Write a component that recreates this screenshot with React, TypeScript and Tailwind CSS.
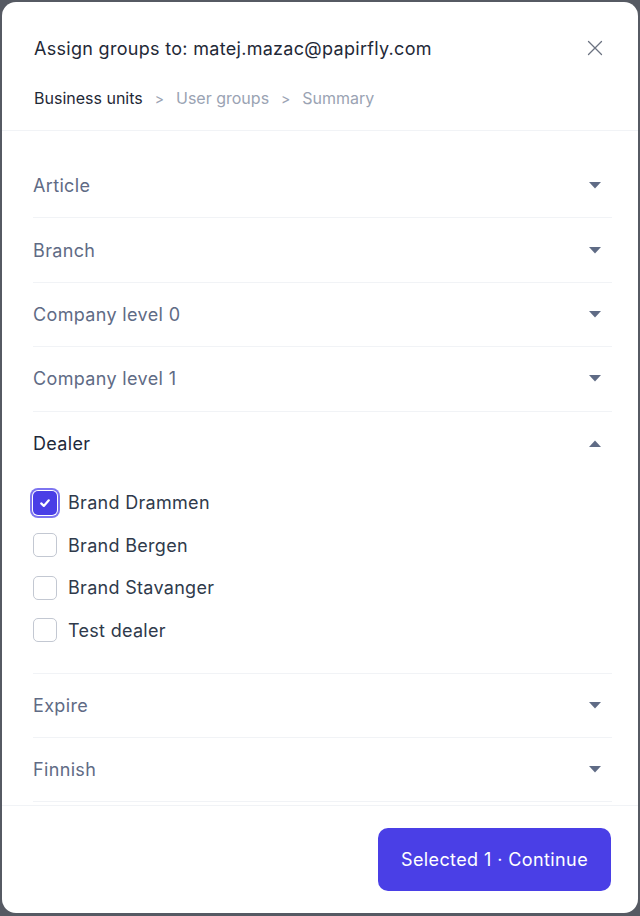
import React from "react";

const Caret = ({ up = false }: { up?: boolean }) => (
  <svg width="12" height="7" viewBox="0 0 12 7" className="shrink-0">
    {up ? (
      <polygon points="0,7 12,7 6,0.5" fill="#5f6b85" />
    ) : (
      <polygon points="0,0 12,0 6,6.5" fill="#5f6b85" />
    )}
  </svg>
);

const Row = ({ label }: { label: string }) => (
  <div className="h-[64.4px] shrink-0 border-b border-[#f1f3f6] flex items-center justify-between pr-[11px]">
    <span className="text-[18px] tracking-[0.35px] text-[#5f6b85]">{label}</span>
    <Caret />
  </div>
);

const Check = ({ label, checked = false }: { label: string; checked?: boolean }) => (
  <div className="h-[42.5px] flex items-center gap-[11px]">
    {checked ? (
      <div className="w-[24px] h-[24px] rounded-[5px] bg-[#4a3fe6] flex items-center justify-center ring-2 ring-[#7d74f0] ring-offset-1">
        <svg width="14" height="14" viewBox="0 0 14 14">
          <path d="M3.2 7.4 L5.8 9.9 L10.8 4.3" stroke="white" strokeWidth="2.2" fill="none" strokeLinecap="round" strokeLinejoin="round" />
        </svg>
      </div>
    ) : (
      <div className="w-[24px] h-[24px] rounded-[5px] border border-[#c3c8d2] bg-white" />
    )}
    <span className="text-[18px] tracking-[0.3px] text-[#2f3a4b]">{label}</span>
  </div>
);

export default function App() {
  return (
    <div className="w-[640px] h-[916px] bg-[#565a63] pt-[2px] pb-[3px] pl-[2px] pr-[2px] font-['Inter',sans-serif]">
      <div className="h-full bg-white rounded-[14px] flex flex-col overflow-hidden">
        <div className="px-[32px] pt-[32px] pb-[20px] border-b border-[#f1f3f6]">
          <div className="flex items-center justify-between h-[28px]">
            <h1 className="text-[18px] font-normal tracking-[0.3px] text-[#1f2937]">
              Assign groups to: matej.mazac@papirfly.com
            </h1>
            <svg width="16" height="16" viewBox="0 0 16 16" className="mr-[3px]">
              <path d="M1.5 1.5 L14.5 14.5 M14.5 1.5 L1.5 14.5" stroke="#6b7280" strokeWidth="1.3" strokeLinecap="round" />
            </svg>
          </div>
          <div className="mt-[24px] h-[24px] flex items-center text-[16px]">
            <span className="text-[#1f2937]">Business units</span>
            <span className="text-[#9aa3b3] text-[14px] mx-[12px]">&gt;</span>
            <span className="text-[#9aa3b3]">User groups</span>
            <span className="text-[#9aa3b3] text-[14px] mx-[12px]">&gt;</span>
            <span className="text-[#9aa3b3]">Summary</span>
          </div>
        </div>
        <div className="flex-1 overflow-hidden pl-[31px] pr-[26px] pt-[23px] flex flex-col">
          <Row label="Article" />
          <Row label="Branch" />
          <Row label="Company level 0" />
          <Row label="Company level 1" />
          <div className="shrink-0 border-b border-[#f1f3f6]">
            <div className="h-[64px] flex items-center justify-between pr-[11px]">
              <span className="text-[18px] tracking-[0.35px] text-[#1e293b]">Dealer</span>
              <Caret up />
            </div>
            <div className="pt-[6px] pb-[21px]">
              <Check label="Brand Drammen" checked />
              <Check label="Brand Bergen" />
              <Check label="Brand Stavanger" />
              <Check label="Test dealer" />
            </div>
          </div>
          <Row label="Expire" />
          <Row label="Finnish" />
        </div>
        <div className="h-[108px] shrink-0 border-t border-[#f1f3f6] flex items-center justify-end pr-[27px]">
          <button className="w-[233px] h-[63px] rounded-[10px] bg-[#4a3fe6] text-white text-[18px] tracking-[0.4px]">
            Selected 1 · Continue
          </button>
        </div>
      </div>
    </div>
  );
}
